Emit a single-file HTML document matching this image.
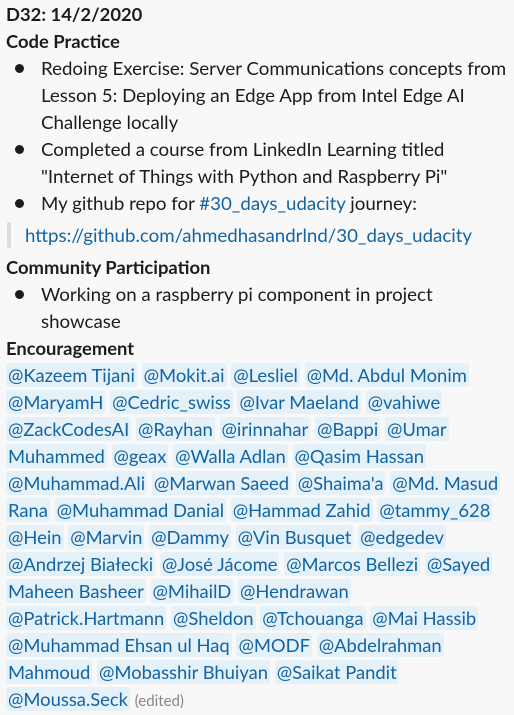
<!DOCTYPE html>
<html><head><meta charset="utf-8"><style>
body{margin:0;background:#f8f8f8;width:514px;height:712px;overflow:hidden;font-family:"Lato","Liberation Sans",sans-serif;color:#1d1c1d;font-size:18.7px;}
.l{position:absolute;left:6px;height:27px;line-height:27px;white-space:nowrap;}
b{font-weight:bold;font-size:18.4px;}
.li{left:41px;}
.dot{position:absolute;left:15px;width:9px;height:9px;border-radius:50%;background:#1d1c1d;}
.m{background:#e5f1f9;color:#1264a3;padding:1px 2px;border-radius:3px;}
.x .l{font-size:18.4px;}
a{color:#1264a3;text-decoration:none;}
.q{position:absolute;left:7px;top:222px;width:4px;height:26px;background:#ddd;border-radius:2px;}
.e{color:#868686;font-size:15px;}
</style></head><body>
<div class="l" style="top:1px"><b>D32: 14/2/2020</b></div>
<div class="l" style="top:28px"><b>Code Practice</b></div>
<div class="dot" style="top:64px"></div>
<div class="l li" style="top:55px">Redoing Exercise: Server Communications concepts from</div>
<div class="l li" style="top:82px">Lesson 5: Deploying an Edge App from Intel Edge AI</div>
<div class="l li" style="top:109px">Challenge locally</div>
<div class="dot" style="top:145px"></div>
<div class="l li" style="top:136px">Completed a course from LinkedIn Learning titled</div>
<div class="l li" style="top:163px">"Internet of Things with Python and Raspberry Pi"</div>
<div class="dot" style="top:199px"></div>
<div class="l li" style="top:190px">My github repo for <a>#30_days_udacity</a> journey:</div>
<div class="q"></div>
<div class="l" style="top:222px;left:25px"><a>https://github.com/ahmedhasandrlnd/30_days_udacity</a></div>
<div class="l" style="top:254px"><b>Community Participation</b></div>
<div class="dot" style="top:290px"></div>
<div class="l li" style="top:281px">Working on a raspberry pi component in project</div>
<div class="l li" style="top:308px">showcase</div>
<div class="l" style="top:335px"><b>Encouragement</b></div>
<div class="x">
<div class="l" style="top:362px"><span class="m">@Kazeem Tijani</span> <span class="m">@Mokit.ai</span> <span class="m">@Lesliel</span> <span class="m">@Md. Abdul Monim</span></div>
<div class="l" style="top:389px"><span class="m">@MaryamH</span> <span class="m">@Cedric_swiss</span> <span class="m">@Ivar Maeland</span> <span class="m">@vahiwe</span></div>
<div class="l" style="top:416px"><span class="m">@ZackCodesAI</span> <span class="m">@Rayhan</span> <span class="m">@irinnahar</span> <span class="m">@Bappi</span> <span class="m">@Umar</span></div>
<div class="l" style="top:443px"><span class="m">Muhammed</span> <span class="m">@geax</span> <span class="m">@Walla Adlan</span> <span class="m">@Qasim Hassan</span></div>
<div class="l" style="top:470px"><span class="m">@Muhammad.Ali</span> <span class="m">@Marwan Saeed</span> <span class="m">@Shaima'a</span> <span class="m">@Md. Masud</span></div>
<div class="l" style="top:497px"><span class="m">Rana</span> <span class="m">@Muhammad Danial</span> <span class="m">@Hammad Zahid</span> <span class="m">@tammy_628</span></div>
<div class="l" style="top:524px"><span class="m">@Hein</span> <span class="m">@Marvin</span> <span class="m">@Dammy</span> <span class="m">@Vin Busquet</span> <span class="m">@edgedev</span></div>
<div class="l" style="top:551px"><span class="m">@Andrzej Białecki</span> <span class="m">@José Jácome</span> <span class="m">@Marcos Bellezi</span> <span class="m">@Sayed</span></div>
<div class="l" style="top:578px"><span class="m">Maheen Basheer</span> <span class="m">@MihailD</span> <span class="m">@Hendrawan</span></div>
<div class="l" style="top:605px"><span class="m">@Patrick.Hartmann</span> <span class="m">@Sheldon</span> <span class="m">@Tchouanga</span> <span class="m">@Mai Hassib</span></div>
<div class="l" style="top:632px"><span class="m">@Muhammad Ehsan ul Haq</span> <span class="m">@MODF</span> <span class="m">@Abdelrahman</span></div>
<div class="l" style="top:659px"><span class="m">Mahmoud</span> <span class="m">@Mobasshir Bhuiyan</span> <span class="m">@Saikat Pandit</span></div>
<div class="l" style="top:686px"><span class="m">@Moussa.Seck</span> <span class="e">(edited)</span></div>
</div>
</body></html>
